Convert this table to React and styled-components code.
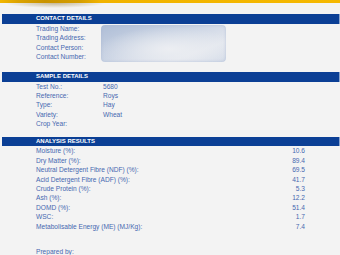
import React from 'react'
import styled, { createGlobalStyle } from 'styled-components'

const GlobalStyle = createGlobalStyle`
  html, body {
    margin: 0;
    padding: 0;
    background: #f3f3f3;
  }
  body {
    font-family: 'Liberation Sans', Arial, sans-serif;
    overflow: hidden;
  }
`

const Page = styled.div`
  width: 340px;
  height: 255px;
  overflow: hidden;
  background: #f3f3f3;
  display: flex;
  flex-direction: column;
`

const TopBar = styled.div`
  height: 3px;
  flex-shrink: 0;
  background: linear-gradient(
    90deg,
    #f3b700 0px,
    #dca300 18px,
    #c99300 45px,
    #d59e00 80px,
    #f1b300 100px,
    #f5b800 340px
  );
`

const BarShade = styled.div`
  height: 5px;
  flex-shrink: 0;
  background: radial-gradient(
    ellipse 50px 5px at 55px 0px,
    rgba(140, 110, 40, 0.45),
    rgba(140, 110, 40, 0) 100%
  );
`

const Section = styled.section`
  margin-top: ${({ $gap }) => $gap}px;
  display: flex;
  flex-direction: column;
`

const SectionHeader = styled.h2`
  margin: 0 1px 0 2px;
  height: 9.5px;
  line-height: 9.5px;
  padding-left: 34px;
  background: #0b3f95;
  color: #ffffff;
  font-size: 6px;
  font-weight: 700;
  box-shadow: 1px 0 0 #8aa3cc;
`

const ContactBody = styled.div`
  display: flex;
  padding-left: 36px;
`

const LabelColumn = styled.div`
  width: 65px;
  display: flex;
  flex-direction: column;
`

const Label = styled.div`
  height: 9.5px;
  line-height: 9.5px;
  font-size: 6.6px;
  color: #4668b0;
  white-space: nowrap;
`

const Redacted = styled.div`
  width: 125px;
  height: 37px;
  margin-top: 1.5px;
  border-radius: 4px;
  background:
    radial-gradient(ellipse 70px 22px at 55% 65%, #eceef2 0%, rgba(236, 238, 242, 0) 100%),
    linear-gradient(160deg, #aebdd6 0%, #cdd6e5 45%, #e3e7ee 75%, #d3dbe8 100%);
  box-shadow: inset 0 0 3px rgba(170, 185, 212, 0.8);
  filter: blur(0.4px);
`

const DetailGrid = styled.div`
  display: grid;
  grid-template-columns: ${({ $cols }) => $cols};
  grid-auto-rows: 9.4px;
  padding: 0 ${({ $right }) => $right}px 0 36px;
  font-size: 6.6px;
  line-height: 9.4px;
  color: #4668b0;
`

const Cell = styled.div`
  white-space: nowrap;
  text-align: ${({ $align }) => $align || 'left'};
`

const Footer = styled.div`
  margin-top: 17px;
  padding-left: 36px;
  font-size: 6.6px;
  color: #4668b0;
`

const contact = ['Trading Name:', 'Trading Address:', 'Contact Person:', 'Contact Number:']

const sample = [
  ['Test No.:', '5680'],
  ['Reference:', 'Roys'],
  ['Type:', 'Hay'],
  ['Variety:', 'Wheat'],
  ['Crop Year:', ''],
]

const analysis = [
  ['Moisture (%):', '10.6'],
  ['Dry Matter (%):', '89.4'],
  ['Neutral Detergent Fibre (NDF) (%):', '69.5'],
  ['Acid Detergent Fibre (ADF) (%):', '41.7'],
  ['Crude Protein (%):', '5.3'],
  ['Ash (%):', '12.2'],
  ['DOMD (%):', '51.4'],
  ['WSC:', '1.7'],
  ['Metabolisable Energy (ME) (MJ/Kg):', '7.4'],
]

export default function App() {
  return (
    <Page>
      <GlobalStyle />
      <TopBar />
      <BarShade />

      <Section $gap={6}>
        <SectionHeader>CONTACT DETAILS</SectionHeader>
        <ContactBody>
          <LabelColumn>
            {contact.map((label) => (
              <Label key={label}>{label}</Label>
            ))}
          </LabelColumn>
          <Redacted />
        </ContactBody>
      </Section>

      <Section $gap={10}>
        <SectionHeader>SAMPLE DETAILS</SectionHeader>
        <DetailGrid $cols="67px 1fr" $right={0}>
          {sample.map(([label, value]) => (
            <React.Fragment key={label}>
              <Cell>{label}</Cell>
              <Cell>{value}</Cell>
            </React.Fragment>
          ))}
        </DetailGrid>
      </Section>

      <Section $gap={8.5}>
        <SectionHeader>ANALYSIS RESULTS</SectionHeader>
        <DetailGrid $cols="1fr auto" $right={35}>
          {analysis.map(([label, value]) => (
            <React.Fragment key={label}>
              <Cell>{label}</Cell>
              <Cell $align="right">{value}</Cell>
            </React.Fragment>
          ))}
        </DetailGrid>
      </Section>

      <Footer>Prepared by:</Footer>
    </Page>
  )
}
